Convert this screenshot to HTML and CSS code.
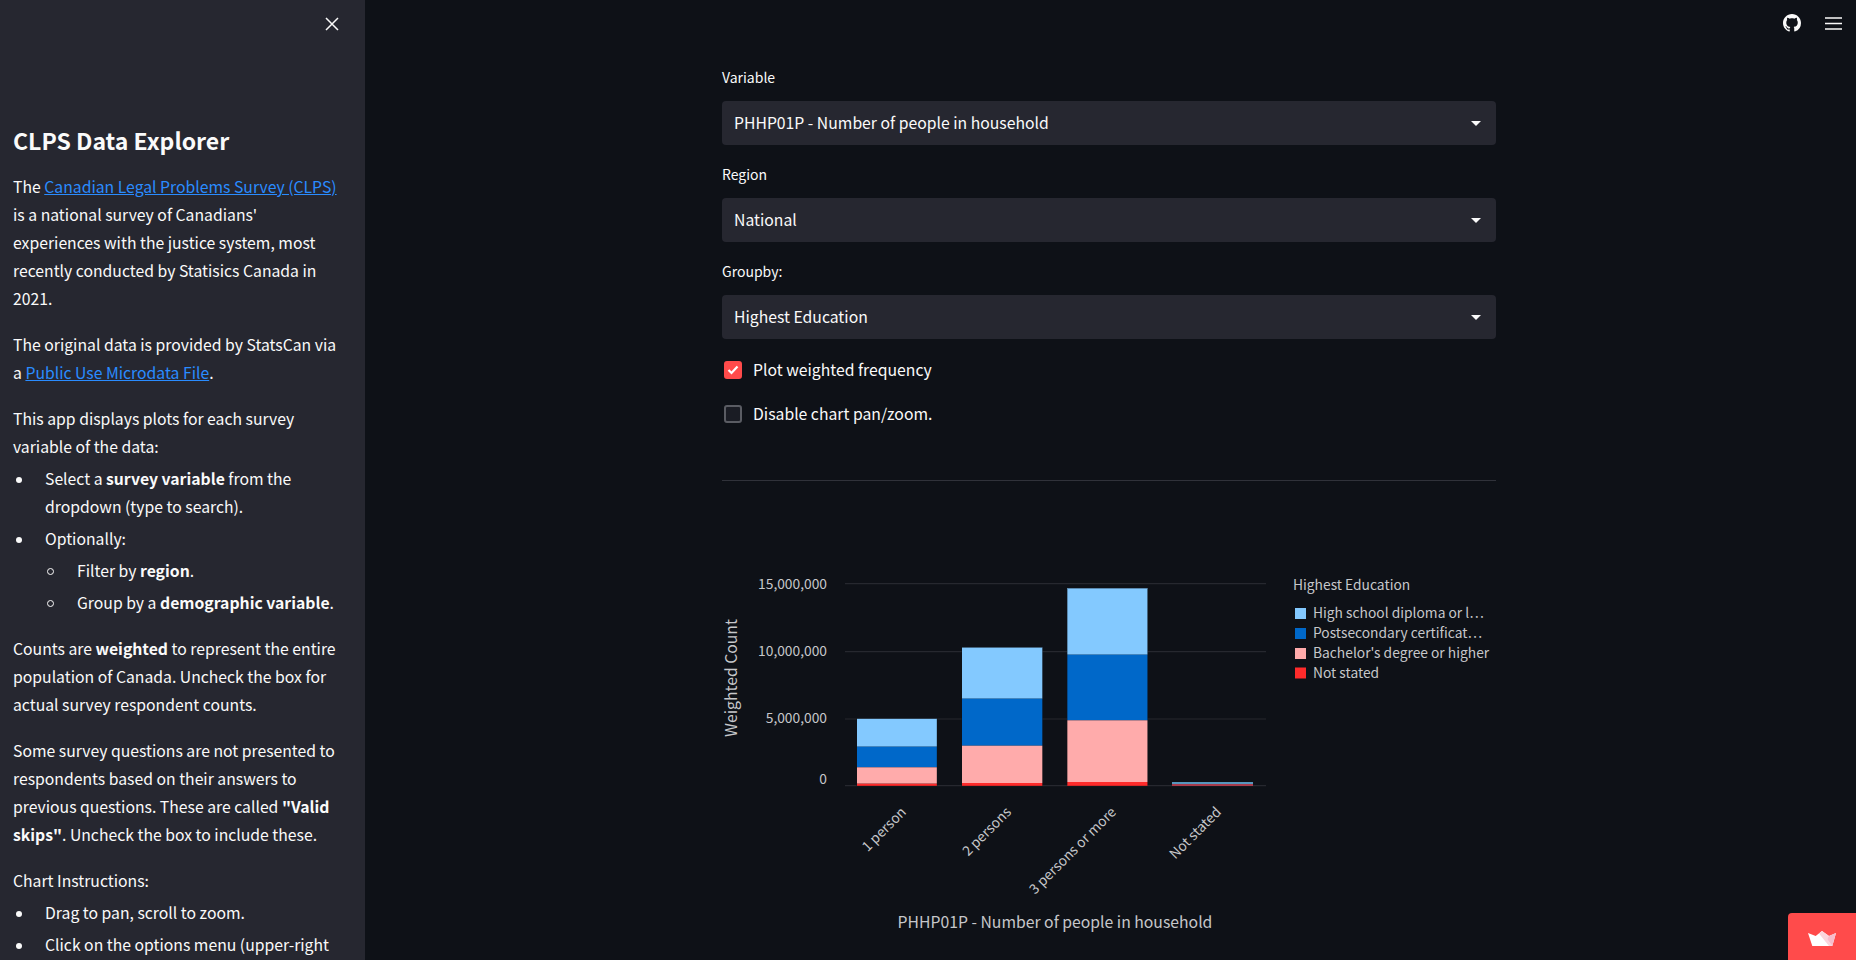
FILE: index.html
```html
<!DOCTYPE html>
<html lang="en">
<head>
    <meta charset="UTF-8">
    <title>CLPS Data Explorer</title>
    <link rel="stylesheet" href="styles.css">
</head>
<body>
    <aside class="sidebar">
        <div class="sidebar-top">
            <svg class="close-icon" viewBox="0 0 14 14" width="14" height="14"><path d="M1 1l12 12M13 1L1 13" stroke="#fafafa" stroke-width="1.5" fill="none"/></svg>
        </div>
        <h2>CLPS Data Explorer</h2>
        <p>The <a href="#">Canadian Legal Problems Survey (CLPS)</a> is a national survey of Canadians' experiences with the justice system, most recently conducted by Statisics Canada in 2021.</p>
        <p>The original data is provided by StatsCan via a <a href="#">Public Use Microdata File</a>.</p>
        <p class="lead">This app displays plots for each survey variable of the data:</p>
        <ul>
            <li><div>Select a <b>survey variable</b> from the dropdown (type to search).</div></li>
            <li>
                <div>Optionally:
                    <ul class="sub">
                        <li><div>Filter by <b>region</b>.</div></li>
                        <li><div>Group by a <b>demographic variable</b>.</div></li>
                    </ul>
                </div>
            </li>
        </ul>
        <p>Counts are <b>weighted</b> to represent the entire population of Canada. Uncheck the box for actual survey respondent counts.</p>
        <p>Some survey questions are not presented to respondents based on their answers to previous questions. These are called <b>"Valid skips"</b>. Uncheck the box to include these.</p>
        <p class="lead">Chart Instructions:</p>
        <ul>
            <li><div>Drag to pan, scroll to zoom.</div></li>
            <li><div>Click on the options menu (upper-right</div></li>
        </ul>
    </aside>

    <main class="main">
        <div class="top-icons">
            <svg viewBox="0 0 16 16" width="18" height="18"><path fill="#fafafa" d="M8 0C3.58 0 0 3.58 0 8c0 3.54 2.29 6.53 5.47 7.59.4.07.55-.17.55-.38 0-.19-.01-.82-.01-1.49-2.01.37-2.53-.49-2.69-.94-.09-.23-.48-.94-.82-1.13-.28-.15-.68-.52-.01-.53.63-.01 1.08.58 1.23.82.72 1.21 1.87.87 2.33.66.07-.52.28-.87.51-1.07-1.78-.2-3.64-.89-3.64-3.95 0-.87.31-1.59.82-2.15-.08-.2-.36-1.02.08-2.12 0 0 .67-.21 2.2.82.64-.18 1.32-.27 2-.27.68 0 1.36.09 2 .27 1.53-1.04 2.2-.82 2.2-.82.44 1.1.16 1.92.08 2.12.51.56.82 1.27.82 2.15 0 3.07-1.87 3.75-3.65 3.95.29.25.54.73.54 1.48 0 1.07-.01 1.93-.01 2.2 0 .21.15.46.55.38A8.013 8.013 0 0016 8c0-4.42-3.58-8-8-8z"/></svg>
            <svg viewBox="0 0 17 13" width="17" height="13"><path d="M0 1h17M0 6.5h17M0 12h17" stroke="#fafafa" stroke-width="1.6" fill="none"/></svg>
        </div>

        <div class="block">
            <label class="field-label">Variable</label>
            <div class="select"><span>PHHP01P - Number of people in household</span><i class="caret"></i></div>
            <label class="field-label">Region</label>
            <div class="select"><span>National</span><i class="caret"></i></div>
            <label class="field-label">Groupby:</label>
            <div class="select"><span>Highest Education</span><i class="caret"></i></div>

            <div class="check-row first">
                <span class="box on"><svg viewBox="0 0 12 10" width="12" height="10"><path d="M1.5 5l3 3 6-6.5" stroke="#fff" stroke-width="2.2" fill="none"/></svg></span>
                Plot weighted frequency
            </div>
            <div class="check-row">
                <span class="box"></span>
                Disable chart pan/zoom.
            </div>

            <hr>

            <svg class="chart" viewBox="722 520 774 440" width="774" height="440">
                <g class="grid">
                    <path d="M845 583.7H1266M845 651.7H1266M845 719H1266M845 785.7H1266"/>
                </g>
                <g class="bars">
                    <rect x="857" y="718.7" width="80" height="28" fill="#83c9ff"/>
                    <rect x="857" y="746.7" width="80" height="20.6" fill="#0068c9"/>
                    <rect x="857" y="767.3" width="80" height="16.4" fill="#ffabab"/>
                    <rect x="857" y="783.7" width="80" height="2.3" fill="#ff2b2b"/>
                    <rect class="edge" x="856.5" y="718.5" width="80.5" height="67.5"/>

                    <rect x="962" y="647.3" width="80.5" height="51.4" fill="#83c9ff"/>
                    <rect x="962" y="698.7" width="80.5" height="47" fill="#0068c9"/>
                    <rect x="962" y="745.7" width="80.5" height="37.3" fill="#ffabab"/>
                    <rect x="962" y="783" width="80.5" height="3" fill="#ff2b2b"/>
                    <rect class="edge" x="961.5" y="647.5" width="81" height="138.5"/>

                    <rect x="1067" y="588" width="80.7" height="66.7" fill="#83c9ff"/>
                    <rect x="1067" y="654.7" width="80.7" height="65.6" fill="#0068c9"/>
                    <rect x="1067" y="720.3" width="80.7" height="61.7" fill="#ffabab"/>
                    <rect x="1067" y="782" width="80.7" height="4" fill="#ff2b2b"/>
                    <rect class="edge" x="1067.5" y="588.5" width="80" height="197.5"/>

                    <rect x="1172" y="782" width="81" height="2" fill="#5796bd"/>
                    <rect x="1172" y="784" width="81" height="2" fill="#a83b4b"/>
                </g>
                <g class="ticks">
                    <text x="827" y="589" text-anchor="end">15,000,000</text>
                    <text x="827" y="656" text-anchor="end">10,000,000</text>
                    <text x="827" y="723" text-anchor="end">5,000,000</text>
                    <text x="827" y="784" text-anchor="end">0</text>
                    <text transform="translate(907 813) rotate(-45)" text-anchor="end">1 person</text>
                    <text transform="translate(1012 813) rotate(-45)" text-anchor="end">2 persons</text>
                    <text transform="translate(1117 813) rotate(-45)" text-anchor="end">3 persons or more</text>
                    <text transform="translate(1222 813) rotate(-45)" text-anchor="end">Not stated</text>
                </g>
                <text class="axis-title" transform="translate(737 678) rotate(-90)" text-anchor="middle">Weighted Count</text>
                <text class="axis-title" x="1055" y="928" text-anchor="middle">PHHP01P - Number of people in household</text>
                <text class="legend-title" x="1293" y="590">Highest Education</text>
                <g class="legend">
                    <rect x="1295" y="608" width="11" height="11" fill="#83c9ff"/>
                    <rect x="1295" y="628" width="11" height="11" fill="#0068c9"/>
                    <rect x="1295" y="648" width="11" height="11" fill="#ffabab"/>
                    <rect x="1295" y="667.5" width="11" height="11" fill="#ff2b2b"/>
                    <text x="1313" y="618">High school diploma or l…</text>
                    <text x="1313" y="638">Postsecondary certificat…</text>
                    <text x="1313" y="658">Bachelor's degree or higher</text>
                    <text x="1313" y="678">Not stated</text>
                </g>
            </svg>
        </div>

        <div class="deploy-badge">
            <svg viewBox="0 0 28 15" width="28" height="15">
                <path fill="#fff" d="M0 2L7.7 5 14 0l7 5 7-3-3.7 13H4.3z"/>
                <path fill="#fbd5dc" d="M14 0l7 5-2 3 5.3 7H21L11 2.5z"/>
                <path fill="#f7bccb" d="M21 5l7-3-3.7 13L19 8z"/>
            </svg>
        </div>
    </main>
</body>
</html>
```

FILE: styles.css
```css
html, body {
    height: 100%;
}
body {
    margin: 0;
    display: flex;
    height: 960px;
    overflow: hidden;
    background: #0e1117;
    color: #fafafa;
    font-family: "Noto Sans CJK SC", "Noto Sans", sans-serif;
    font-size: 15.75px;
}
.sidebar {
    width: 365px;
    flex: none;
    box-sizing: border-box;
    height: 960px;
    overflow: hidden;
    padding: 0 24px 0 13px;
    background: #262730;
    line-height: 28px;
}
.sidebar-top {
    height: 48px;
    display: flex;
    justify-content: flex-end;
    align-items: center;
    padding-right: 3px;
    margin-right: -1px;
}
.sidebar h2 {
    margin: 73px 0 14px;
    font-size: 23px;
    line-height: 38px;
    font-weight: 700;
}
.sidebar p {
    margin: 0 0 18px;
}
.sidebar p.lead {
    margin-bottom: 4px;
}
.sidebar a {
    color: #2a8cff;
    text-decoration: underline;
}
.sidebar b {
    font-weight: 700;
}
.sidebar ul {
    list-style: none;
    margin: 0 0 18px;
    padding: 0;
}
.sidebar ul.sub {
    margin: 0;
}
.sidebar li {
    display: grid;
    grid-template-columns: 32px 1fr;
    margin-top: 4px;
}
.sidebar li:first-child {
    margin-top: 0;
}
.sub li:first-child {
    margin-top: 4px;
}
.sidebar li::before {
    content: "";
    width: 6px;
    height: 6px;
    margin: 12px 0 0 3px;
    border-radius: 50%;
    background: #fafafa;
}
.sub li::before {
    box-sizing: border-box;
    width: 7px;
    height: 7px;
    margin: 11px 0 0 2px;
    border: 1px solid #fafafa;
    background: none;
}

.main {
    flex: 1;
    position: relative;
    padding-right: 3px;
}
.top-icons {
    position: absolute;
    top: 14px;
    right: 14px;
    display: flex;
    align-items: center;
    gap: 24px;
}
.block {
    width: 774px;
    margin: 0 auto;
    padding-top: 65px;
}
.field-label {
    display: block;
    height: 36px;
    font-size: 14px;
    line-height: 24px;
}
.select {
    height: 44px;
    margin-bottom: 17px;
    padding: 0 15px 0 12px;
    display: flex;
    justify-content: space-between;
    align-items: center;
    background: #262730;
    border-radius: 4px;
    line-height: 42px;
}
.caret {
    width: 0;
    height: 0;
    border-left: 5px solid transparent;
    border-right: 5px solid transparent;
    border-top: 5px solid #fafafa;
}
.check-row {
    display: flex;
    align-items: center;
    gap: 11px;
    height: 24px;
    margin-bottom: 20px;
    padding-left: 2px;
    line-height: 24px;
}
.check-row.first {
    margin-top: 19px;
}
.box {
    box-sizing: border-box;
    width: 18px;
    height: 18px;
    display: flex;
    align-items: center;
    justify-content: center;
    background: #1a1c24;
    border: 2px solid #5a5c63;
    border-radius: 3px;
}
.box.on {
    background: #ff4b4b;
    border-color: #ff4b4b;
}
hr {
    height: 1px;
    margin: 54px 0 39px;
    border: none;
    background: #30323a;
}
.chart {
    display: block;
    font-size: 14px;
}
.grid path {
    stroke: #26282f;
    stroke-width: 1.2;
    fill: none;
}
.bars .edge {
    fill: none;
    stroke: #0e1117;
    stroke-opacity: 0.35;
}
.chart text {
    fill: #c6c7ca;
}
.ticks text, .legend text, .legend-title {
    font-size: 13.8px;
}
.axis-title {
    font-size: 15.75px;
}
.deploy-badge {
    position: absolute;
    right: 0;
    bottom: 0;
    width: 68px;
    height: 47px;
    padding-top: 18px;
    box-sizing: border-box;
    display: flex;
    justify-content: center;
    align-items: flex-start;
    background: #ff4b4b;
    border-top-left-radius: 4px;
}
```
